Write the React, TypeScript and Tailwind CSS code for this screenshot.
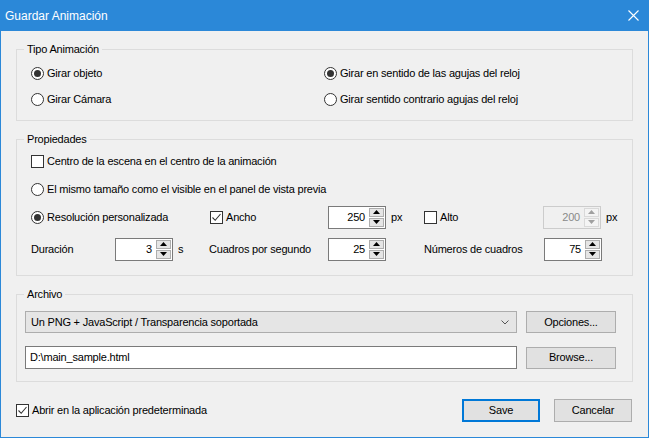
import React from 'react'

const font = { fontFamily: '"Liberation Sans", Arial, sans-serif' }

function Radio({ checked, label }: { checked?: boolean; label: string }) {
  return (
    <div className="flex items-center">
      <span className="flex h-[13px] w-[13px] items-center justify-center rounded-full border border-[#333] bg-white">
        {checked && <span className="h-[7px] w-[7px] rounded-full bg-[#333]" />}
      </span>
      <span className="ml-[3px]">{label}</span>
    </div>
  )
}

function Check({ checked, label }: { checked?: boolean; label: string }) {
  return (
    <div className="flex items-center">
      <span className="flex h-[13px] w-[13px] items-center justify-center border border-[#333] bg-white">
        {checked && (
          <svg width="11" height="11" viewBox="0 0 11 11">
            <path d="M1.5 5.5 L4.2 8.3 L9.5 2" fill="none" stroke="#333" strokeWidth="1.1" />
          </svg>
        )}
      </span>
      <span className="ml-[3px]">{label}</span>
    </div>
  )
}

function Spin({ value, disabled }: { value: string; disabled?: boolean }) {
  const arrow = disabled ? '#a0a0a0' : '#000'
  return (
    <div
      className={
        'flex h-[23px] w-[58px] border ' +
        (disabled ? 'border-[#cccccc] bg-[#f0f0f0] text-[#8a8a8a]' : 'border-[#7a7a7a] bg-white text-black')
      }
    >
      <div className="flex flex-1 items-center justify-end pr-[4px]">{value}</div>
      <div className="flex w-[16px] flex-col gap-[1px] py-[1px] pr-[1px]">
        <div className={'flex flex-1 items-center justify-center border ' + (disabled ? 'border-[#d9d9d9] bg-[#f4f4f4]' : 'border-[#adadad] bg-[#e5e5e5]')}>
          <svg width="7" height="4" viewBox="0 0 7 4"><path d="M0 4 L3.5 0 L7 4 Z" fill={arrow} /></svg>
        </div>
        <div className={'flex flex-1 items-center justify-center border ' + (disabled ? 'border-[#d9d9d9] bg-[#f4f4f4]' : 'border-[#adadad] bg-[#e5e5e5]')}>
          <svg width="7" height="4" viewBox="0 0 7 4"><path d="M0 0 L3.5 4 L7 0 Z" fill={arrow} /></svg>
        </div>
      </div>
    </div>
  )
}

function Group({ title, className, children }: { title: string; className: string; children: React.ReactNode }) {
  return (
    <fieldset className={'border border-[#dcdcdc] ' + className}>
      <legend className="ml-[7px] px-[3px] leading-[16px]">{title}</legend>
      {children}
    </fieldset>
  )
}

export default function App() {
  return (
    <div className="flex h-[438px] w-[649px] flex-col bg-[#f0f0f0] text-[11px] tracking-[-0.2px] text-black" style={font}>
      {/* barra de título */}
      <div className="flex h-[31px] shrink-0 items-center justify-between bg-[#2b88d8] pl-[5px] pr-[10px] text-[12px] tracking-normal text-white">
        <span>Guardar Animación</span>
        <svg width="11" height="11" viewBox="0 0 11 11">
          <path d="M0.5 0.5 L10.5 10.5 M10.5 0.5 L0.5 10.5" stroke="#fff" strokeWidth="1.1" />
        </svg>
      </div>

      <div className="flex flex-1 flex-col border-x border-b border-[#2b88d8] px-[15px]">
        {/* Tipo Animación */}
        <Group title="Tipo Animación" className="mt-[10px] h-[80px]">
          <div className="flex flex-col pl-[14px] pt-[3px]">
            <div className="flex h-[26px] items-center">
              <div className="w-[293px]"><Radio checked label="Girar objeto" /></div>
              <Radio checked label="Girar en sentido de las agujas del reloj" />
            </div>
            <div className="flex h-[26px] items-center">
              <div className="w-[293px]"><Radio label="Girar Cámara" /></div>
              <Radio label="Girar sentido contrario agujas del reloj" />
            </div>
          </div>
        </Group>

        {/* Propiedades */}
        <Group title="Propiedades" className="mt-[10px] h-[145px]">
          <div className="flex flex-col pl-[14px]">
            <div className="flex h-[28px] items-center">
              <Check label="Centro de la escena en el centro de la animación" />
            </div>
            <div className="flex h-[28px] items-center">
              <Radio label="El mismo tamaño como el visible en el panel de vista previa" />
            </div>
            <div className="flex h-[28px] items-center">
              <div className="w-[179px]"><Radio checked label="Resolución personalizada" /></div>
              <div className="w-[118px]"><Check checked label="Ancho" /></div>
              <div className="flex w-[96px] items-center">
                <Spin value="250" />
                <span className="ml-[5px]">px</span>
              </div>
              <div className="w-[119px]"><Check label="Alto" /></div>
              <div className="flex items-center">
                <Spin value="200" disabled />
                <span className="ml-[5px]">px</span>
              </div>
            </div>
            <div className="mt-[4px] flex h-[28px] items-center">
              <div className="w-[84px]">Duración</div>
              <div className="flex w-[94px] items-center">
                <Spin value="3" />
                <span className="ml-[5px]">s</span>
              </div>
              <div className="w-[119px]">Cuadros por segundo</div>
              <div className="w-[96px]"><Spin value="25" /></div>
              <div className="w-[120px]">Números de cuadros</div>
              <Spin value="75" />
            </div>
          </div>
        </Group>

        {/* Archivo */}
        <Group title="Archivo" className="mt-[10px] h-[96px]">
          <div className="flex flex-col gap-[13px] pl-[8px] pr-[16px] pt-[9px]">
            <div className="flex items-center">
              <div className="flex h-[22px] w-[492px] items-center justify-between border border-[#adadad] bg-[#e5e5e5] pl-[5px] pr-[7px]">
                <span>Un PNG + JavaScript / Transparencia soportada</span>
                <svg width="8" height="5" viewBox="0 0 8 5"><path d="M0.5 0.5 L4 4 L7.5 0.5" fill="none" stroke="#555" strokeWidth="1" /></svg>
              </div>
              <button className="ml-[9px] h-[22px] w-[90px] border border-[#adadad] bg-[#e1e1e1]">Opciones...</button>
            </div>
            <div className="flex items-center">
              <div className="flex h-[23px] w-[492px] items-center border border-[#7a7a7a] bg-white pl-[4px]">
                D:\main_sample.html
              </div>
              <button className="ml-[9px] h-[22px] w-[90px] border border-[#adadad] bg-[#e1e1e1]">Browse...</button>
            </div>
          </div>
        </Group>

        {/* pie */}
        <div className="mt-[17px] flex items-center justify-between pr-[1px]">
          <Check checked label="Abrir en la aplicación predeterminada" />
          <div className="flex gap-[14px]">
            <button className="h-[23px] w-[78px] border-2 border-[#0078d7] bg-[#e1e1e1]">Save</button>
            <button className="h-[23px] w-[78px] border border-[#adadad] bg-[#e1e1e1]">Cancelar</button>
          </div>
        </div>
      </div>
    </div>
  )
}
